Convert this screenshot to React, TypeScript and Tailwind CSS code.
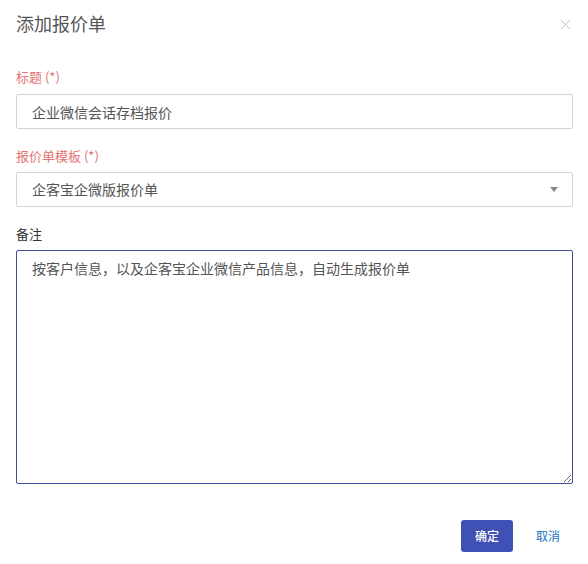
import { X } from 'lucide-react';

const font = { fontFamily: '"Noto Sans CJK SC", "Noto Sans", sans-serif' };

export default function App() {
  return (
    <div className="w-[588px] h-[564px] bg-white text-[#555]" style={font}>
      <div className="flex items-center justify-between pl-4 pr-[14px] pt-[10px] h-[36px]">
        <h2 className="text-[18px] leading-[26px] text-[#555] font-normal">添加报价单</h2>
        <X size={17} strokeWidth={1.3} className="text-[#bdbdbd] mt-[2px]" />
      </div>

      <div className="pl-4 pr-[15px] pt-[32px]">
        <label className="block text-[13px] leading-[18px] text-[#e57373]">标题 (*)</label>
        <input
          className="mt-[8px] block w-full h-[35px] border border-[#d4d4d4] rounded-[2px] px-[15px] text-[14px] text-[#555] outline-none"
          defaultValue="企业微信会话存档报价"
          style={font}
        />

        <label className="block mt-[18px] text-[13px] leading-[18px] text-[#e57373]">报价单模板 (*)</label>
        <div className="mt-[7px] flex items-center justify-between h-[35px] border border-[#d4d4d4] rounded-[2px] pl-[15px] pr-[14px] text-[14px] text-[#555]">
          <span>企客宝企微版报价单</span>
          <svg width="8" height="5" viewBox="0 0 8 5">
            <path d="M0 0h8L4 5z" fill="#888" />
          </svg>
        </div>

        <label className="block mt-[18px] text-[13px] leading-[18px] text-[#333]">备注</label>
        <textarea
          className="mt-[7px] block w-full h-[234px] border border-[#3f4d9a] rounded-[2px] px-[15px] py-[7px] text-[14px] leading-[20px] text-[#555] outline-none"
          defaultValue="按客户信息，以及企客宝企业微信产品信息，自动生成报价单"
          style={font}
        />

        <div className="flex items-center justify-end mt-[36px] pr-[13px]">
          <button className="w-[52px] h-[32px] rounded-[3px] bg-[#3f51b5] text-white text-[12px] font-medium">确定</button>
          <button className="ml-[23px] text-[12px] text-[#1a73c8]">取消</button>
        </div>
      </div>
    </div>
  );
}
